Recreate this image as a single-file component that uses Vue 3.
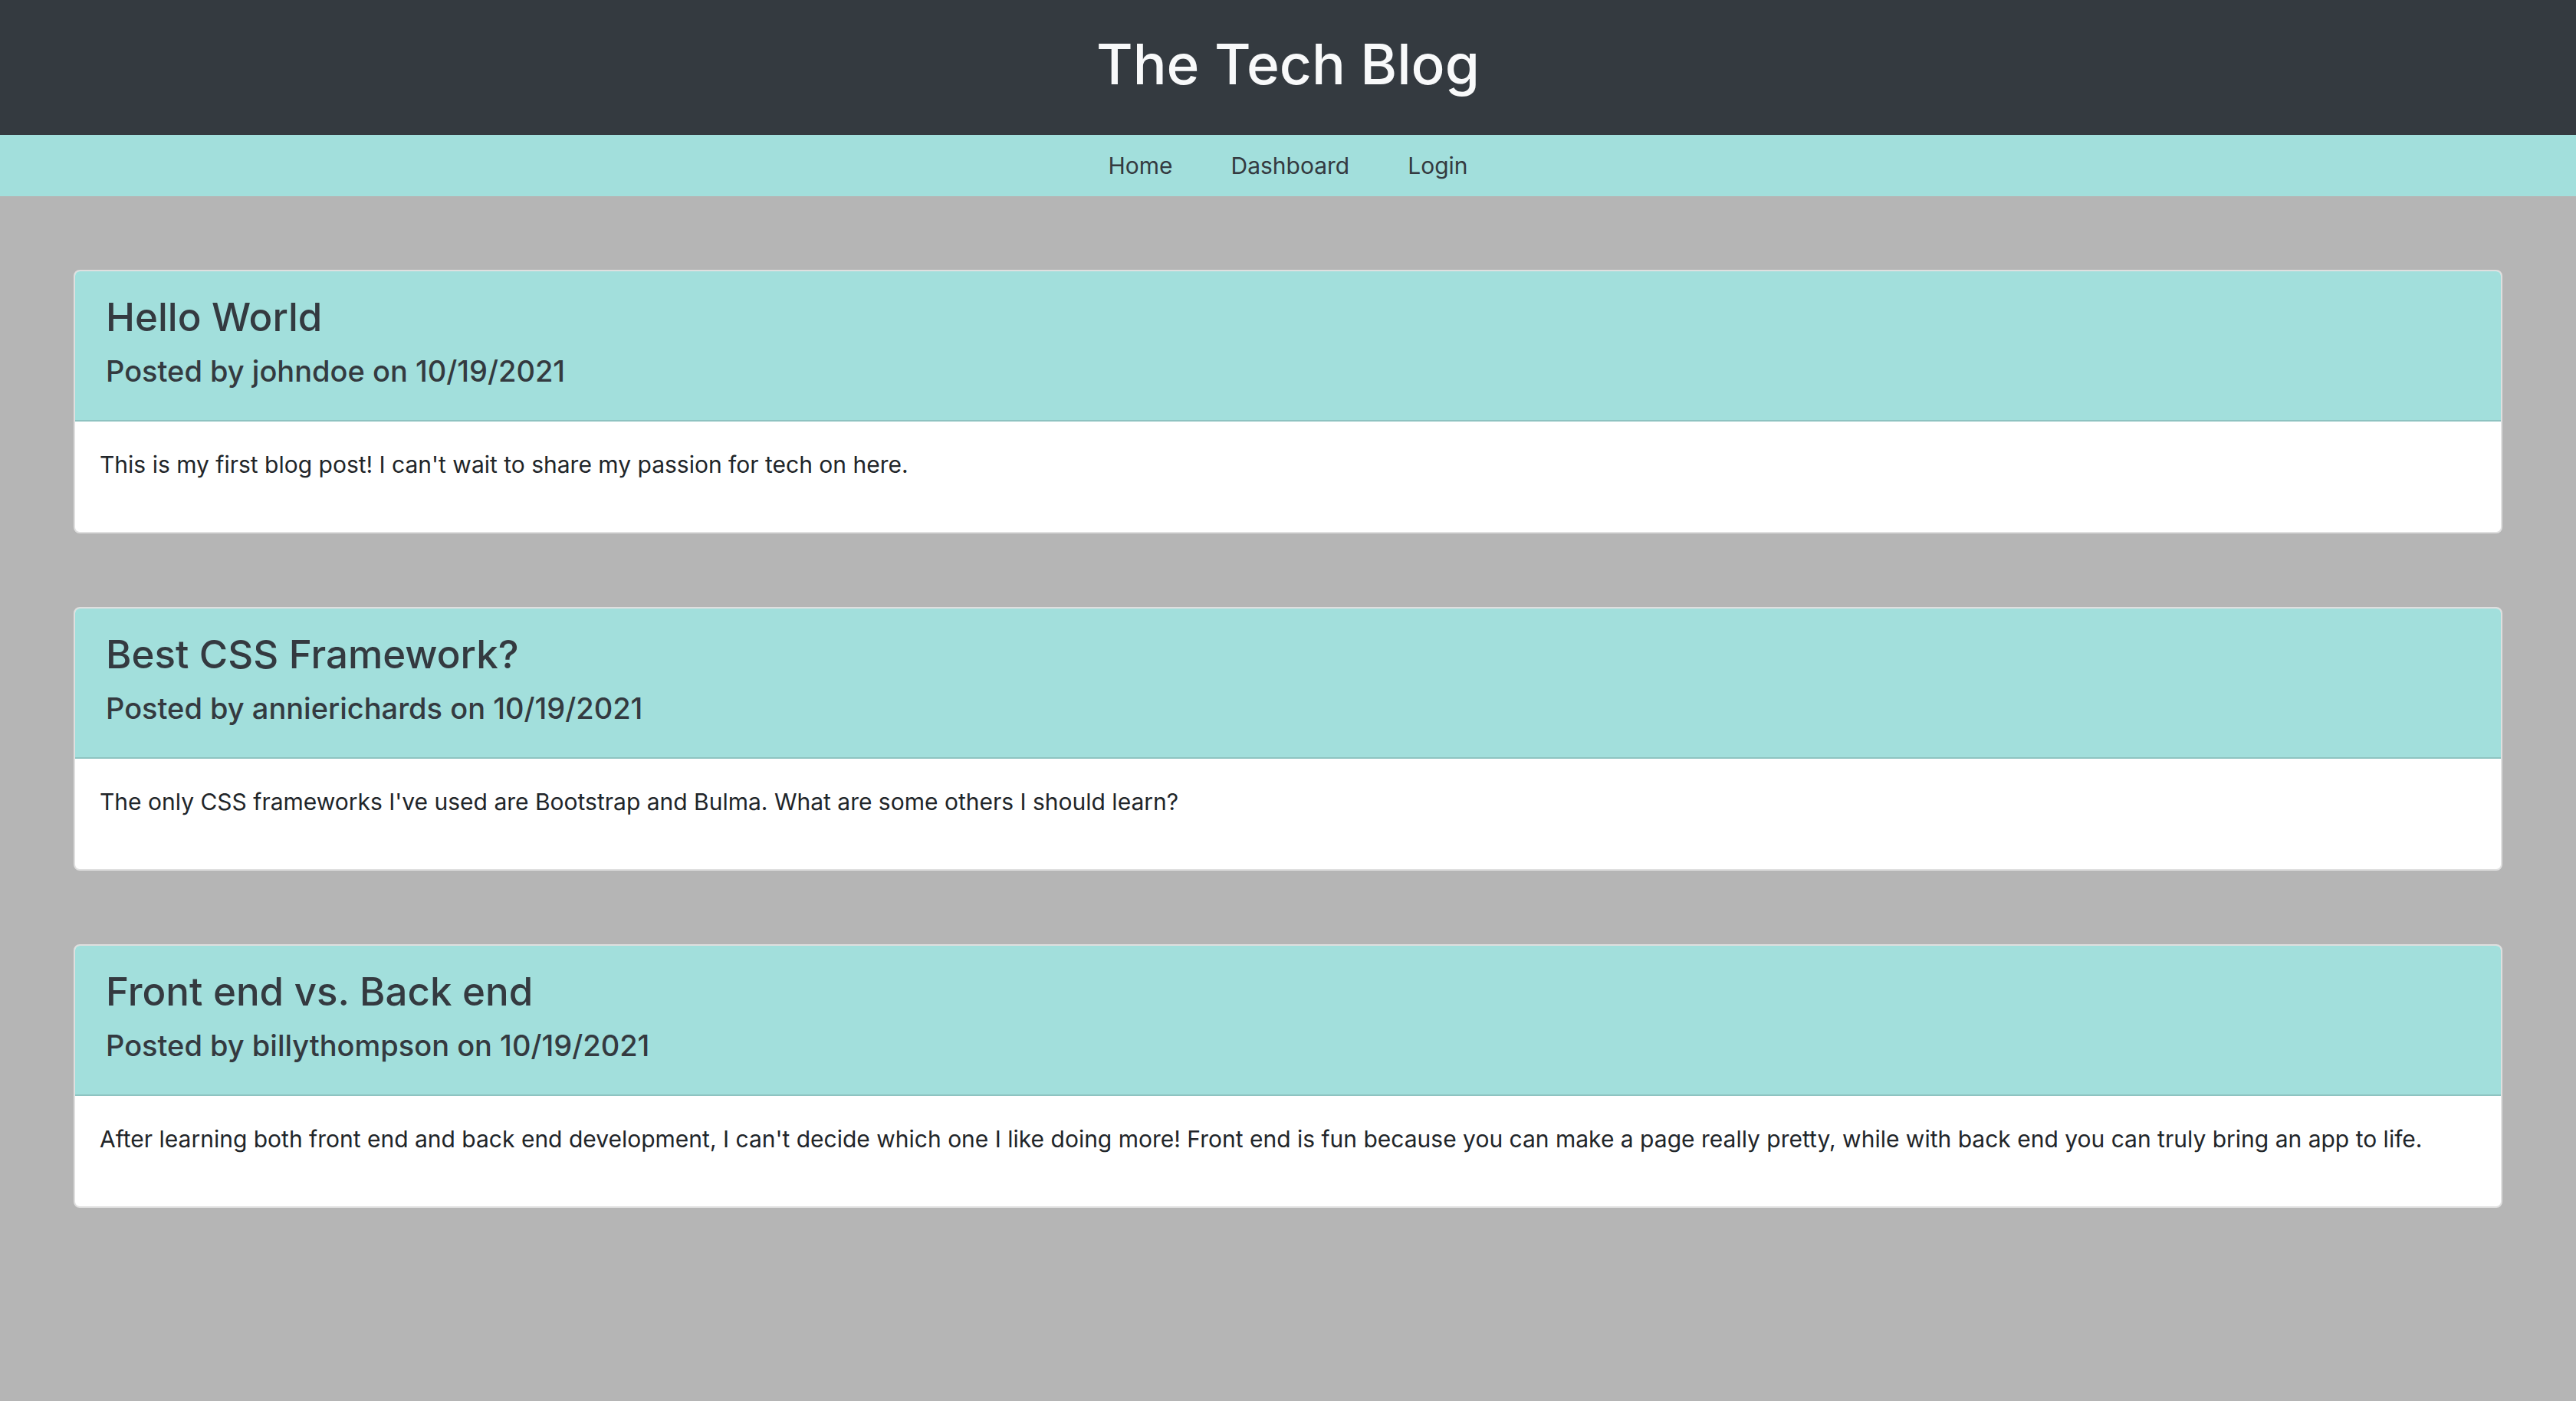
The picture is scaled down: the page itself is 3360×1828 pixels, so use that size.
<script setup>
const links = ['Home', 'Dashboard', 'Login']
const posts = [
  { title: 'Hello World', author: 'johndoe', date: '10/19/2021', body: "This is my first blog post! I can't wait to share my passion for tech on here." },
  { title: 'Best CSS Framework?', author: 'annierichards', date: '10/19/2021', body: "The only CSS frameworks I've used are Bootstrap and Bulma. What are some others I should learn?" },
  { title: 'Front end vs. Back end', author: 'billythompson', date: '10/19/2021', body: "After learning both front end and back end development, I can't decide which one I like doing more! Front end is fun because you can make a page really pretty, while with back end you can truly bring an app to life." },
]
</script>

<template>
  <header class="banner"><h1>The Tech Blog</h1></header>
  <nav class="nav">
    <a v-for="link in links" :key="link" href="#">{{ link }}</a>
  </nav>
  <main class="posts">
    <article v-for="post in posts" :key="post.title" class="card">
      <header class="card-header">
        <h2>{{ post.title }}</h2>
        <h3>Posted by {{ post.author }} on {{ post.date }}</h3>
      </header>
      <p class="card-body">{{ post.body }}</p>
    </article>
  </main>
</template>

<style>
body {
  background: #b5b5b5;
  font-family: Inter, "Liberation Sans", sans-serif;
  font-size: 30px;
  line-height: 48px;
  color: #212529;
}
</style>

<style scoped>
h1, h2, h3, p { margin: 0; font-weight: 500; }
.banner { background: #343a40; color: #f8f9fa; text-align: center; padding: 36px 32px 44px; }
h1 { font-size: 73px; line-height: 96px; }
.nav { display: flex; justify-content: center; gap: 76px; padding: 16px; background: #a2dfdc; }
.nav a { color: #343a40; text-decoration: none; }
.posts { display: flex; flex-direction: column; gap: 96px; padding: 96px; }
.card { border: 2px solid #dfdfdf; border-radius: 8px; background: #fff; overflow: hidden; }
.card-header { background: #a2dfdc; color: #343a40; padding: 24px 40px 40px; border-bottom: 2px solid #8ec3c1; }
h2 { font-size: 51px; line-height: 72px; margin-bottom: 10px; }
h3 { font-size: 38px; line-height: 48px; }
.card-body { padding: 32px 32px 64px; font-weight: 400; }
</style>
